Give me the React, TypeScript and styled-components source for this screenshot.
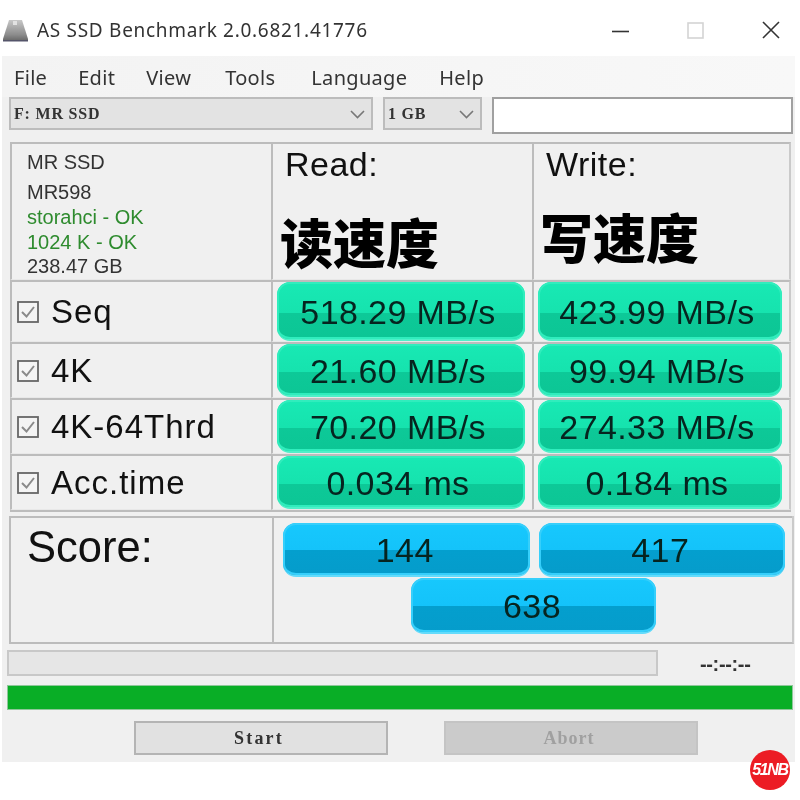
import { Fragment } from "react";
import styled, { createGlobalStyle } from "styled-components";

const GlobalStyle = createGlobalStyle`
  html, body {
    margin: 0;
    padding: 0;
    background: #fff;
  }
`

const Page = styled.div`
  position: relative;
  width: 800px;
  height: 800px;
  overflow: hidden;
  background: #fff;
  font-family: "Liberation Sans", Arial, sans-serif;
  color: #111;
  filter: blur(0.4px);
`

const TitleBar = styled.div`
  display: flex;
  align-items: center;
  height: 56px;
  padding: 4px 0 0 3px;
  box-sizing: border-box;
`

const TitleText = styled.div`
  margin-left: 9px;
  font-family: "Noto Sans", sans-serif;
  font-size: 19px;
  letter-spacing: 0.7px;
  color: #333;
`

const WindowButtons = styled.div`
  display: flex;
  align-items: center;
  margin-left: auto;
  gap: 58px;
  padding-right: 20px;
`

const Window = styled.div`
  margin-left: 2px;
  width: 793px;
  height: 706px;
  background: #f0f0f0;
`

const MenuBar = styled.div`
  display: flex;
  align-items: center;
  height: 41px;
  padding: 1px 0 0 12px;
  box-sizing: border-box;
  background: linear-gradient(90deg, #f3f3f3, #f8f8f8);
  font-family: "Noto Sans", sans-serif;
  font-size: 20px;
  letter-spacing: 0.3px;
  color: #333;
`

const MenuItem = styled.span<{ $gap: number }>`
  margin-right: ${(p) => p.$gap}px;
`

const ControlRow = styled.div`
  display: flex;
  align-items: flex-start;
  height: 45px;
  padding-left: 7px;
`

const Combo = styled.div<{ $width: number; $gap: number }>`
  display: flex;
  align-items: center;
  justify-content: space-between;
  box-sizing: border-box;
  width: ${(p) => p.$width}px;
  height: 33px;
  margin-right: ${(p) => p.$gap}px;
  padding: 1px 6px 0 3px;
  background: #e3e3e3;
  border: 2px solid #bcbcbc;
  font-family: "Liberation Serif", serif;
  font-size: 16px;
  font-weight: bold;
  letter-spacing: 0.8px;
  color: #333;
`

const TextBox = styled.div`
  box-sizing: border-box;
  width: 301px;
  height: 37px;
  background: #fff;
  border: 2px solid #a0a0a0;
`

const ResultGrid = styled.div`
  display: grid;
  grid-template-columns: 261px 261px 259px;
  grid-template-rows: 138px 62px 56px 56px 56px;
  margin-left: 8px;
  width: 781px;
  border-bottom: 2px solid #bcbcbc;
`

const Cell = styled.div<{ $last?: boolean }>`
  box-sizing: border-box;
  border-top: 2px solid #bcbcbc;
  border-left: 2px solid #bcbcbc;
  border-right: ${(p) => (p.$last ? "2px solid #cacaca" : "none")};
  border-bottom: 1px solid #e8e8e8;
`

const DriveCell = styled(Cell)`
  padding: 3px 0 0 15px;
  font-size: 20px;
  color: #333;
`

const DriveLine = styled.div<{ $height: number; $green?: boolean; $pull?: number }>`
  height: ${(p) => p.$height}px;
  line-height: ${(p) => p.$height}px;
  margin-bottom: ${(p) => p.$pull || 0}px;
  color: ${(p) => (p.$green ? "#2e8b2e" : "#333")};
`

const HeadCell = styled(Cell)`
  padding-left: 12px;
`

const HeadLabel = styled.div`
  height: 44px;
  font-size: 34px;
  letter-spacing: 0.5px;
  line-height: 40px;
`

const BigLabel = styled.div<{ $top: number; $left: number }>`
  margin-top: ${(p) => p.$top}px;
  margin-left: ${(p) => p.$left}px;
  font-family: "Noto Sans CJK SC", sans-serif;
  font-size: 53px;
  font-weight: 900;
  line-height: 56px;
  color: #000;
`

const NameCell = styled(Cell)`
  display: flex;
  align-items: center;
  gap: 12px;
  padding-left: 5px;
  font-size: 33px;
  letter-spacing: 1px;
`

const ValueCell = styled(Cell)`
  display: flex;
  align-items: stretch;
  padding: 0 7px 0 4px;
`

const Pill = styled.div<{ $tone: "green" | "blue" }>`
  display: flex;
  align-items: center;
  justify-content: center;
  flex: 1;
  box-sizing: border-box;
  padding: 3px ${(p) => (p.$tone === "green" ? 6 : 3)}px 0 0;
  border-radius: 13px;
  font-size: 34px;
  letter-spacing: 0.4px;
  color: #06241f;
  background: ${(p) =>
    p.$tone === "green"
      ? "linear-gradient(180deg, #18e9b4 0%, #16e3ae 54%, #0dc998 54%, #0cc695 100%)"
      : "linear-gradient(180deg, #17c8fd 0%, #14c3fa 52%, #049fce 52%, #059ccb 100%)"};
  box-shadow: inset 0 0 0 2px
    ${(p) => (p.$tone === "green" ? "#30edbd" : "#36cffb")};
  border-bottom: 2px solid ${(p) => (p.$tone === "green" ? "#4ff0c8" : "#63dbfb")};
`

const ScoreBox = styled.div`
  display: grid;
  grid-template-columns: 263px 1fr;
  box-sizing: border-box;
  margin: 4px 0 0 7px;
  width: 785px;
  height: 128px;
  border-bottom: 2px solid #bcbcbc;
  border-right: 2px solid #cacaca;
`

const ScoreLabel = styled.div`
  padding: 4px 0 0 16px;
  border-top: 2px solid #bcbcbc;
  border-left: 2px solid #bcbcbc;
  font-size: 43.5px;
  line-height: 50px;
`

const ScoreValues = styled.div`
  display: grid;
  grid-template-columns: repeat(2, 1fr);
  grid-template-rows: 54px 56px;
  gap: 1px 9px;
  padding: 5px 7px 0 9px;
  border-top: 2px solid #bcbcbc;
  border-left: 2px solid #bcbcbc;
`

const ScoreWrap = styled.div`
  display: flex;
  grid-column: 1 / -1;
  padding: 0 129px 0 128px;
`

const ProgressRow = styled.div`
  display: flex;
  align-items: center;
  margin: 6px 0 0 5px;
  height: 26px;
`

const Progress = styled.div`
  box-sizing: border-box;
  width: 651px;
  height: 26px;
  background: #e6e6e6;
  border: 2px solid #c8c8c8;
`

const Eta = styled.div`
  margin-left: 42px;
  padding-top: 2px;
  font-size: 20px;
  font-weight: bold;
  letter-spacing: -0.35px;
  color: #333;
`

const GreenBar = styled.div`
  box-sizing: border-box;
  margin: 9px 0 0 5px;
  width: 786px;
  height: 25px;
  background: #09ae26;
  border: 1px solid #8fc79a;
`

const ButtonRow = styled.div`
  display: flex;
  gap: 56px;
  margin: 11px 0 0 132px;
`

const ActionButton = styled.div<{ $disabled?: boolean }>`
  display: flex;
  align-items: center;
  justify-content: center;
  box-sizing: border-box;
  width: 254px;
  height: 34px;
  padding-right: 4px;
  background: ${(p) => (p.$disabled ? "#cbcbcb" : "#e1e1e1")};
  border: 2px solid ${(p) => (p.$disabled ? "#c4c4c4" : "#b4b4b4")};
  font-family: "Liberation Serif", serif;
  font-size: 18px;
  font-weight: bold;
  letter-spacing: ${(p) => (p.$disabled ? "1px" : "2.2px")};
  color: ${(p) => (p.$disabled ? "#a0a0a0" : "#333")};
`

const Badge = styled.div`
  position: absolute;
  left: 750px;
  top: 750px;
  display: flex;
  align-items: center;
  justify-content: center;
  width: 40px;
  height: 40px;
  border-radius: 50%;
  background: #ec1c24;
  font-family: "Liberation Sans Narrow", "Liberation Sans", sans-serif;
  font-size: 16px;
  font-weight: bold;
  font-style: italic;
  letter-spacing: -1.4px;
  color: #fff;
`

const DriveIcon = () => (
  <svg width="25" height="23" viewBox="0 0 25 23">
    <defs>
      <linearGradient id="drive" x1="0" y1="0" x2="0" y2="1">
        <stop offset="0" stopColor="#c8c8c8" />
        <stop offset="0.7" stopColor="#8c8c8c" />
        <stop offset="1" stopColor="#666" />
      </linearGradient>
    </defs>
    <path d="M6 1h13l6 19v2H0v-2z" fill="url(#drive)" />
    <path d="M10 2h4v4h-4z" fill="#e2e2e2" />
    <path d="M0 21h25v1.5H0z" fill="#55556a" />
  </svg>
)

const MinimizeIcon = () => (
  <svg width="17" height="17" viewBox="0 0 17 17">
    <path d="M0 9.5h17" stroke="#333" strokeWidth="1.6" />
  </svg>
)

const MaximizeIcon = () => (
  <svg width="17" height="17" viewBox="0 0 17 17">
    <rect x="1" y="1" width="15" height="15" fill="none" stroke="#d4d4d4" strokeWidth="1.6" />
  </svg>
)

const CloseIcon = () => (
  <svg width="18" height="18" viewBox="0 0 18 18">
    <path d="M1 1l16 16M17 1L1 17" stroke="#333" strokeWidth="1.6" />
  </svg>
)

const Chevron = () => (
  <svg width="15" height="9" viewBox="0 0 15 9">
    <path d="M1 1l6.5 6.5L14 1" fill="none" stroke="#777" strokeWidth="1.6" />
  </svg>
)

const CheckIcon = () => (
  <svg width="22" height="22" viewBox="0 0 22 22">
    <rect x="1" y="1" width="20" height="20" fill="#f4f4f4" stroke="#666" strokeWidth="1.8" />
    <path d="M5 11l4.5 4.5L17 6" fill="none" stroke="#8a8a8a" strokeWidth="2" />
  </svg>
)

const rows = [
  { name: "Seq", read: "518.29 MB/s", write: "423.99 MB/s" },
  { name: "4K", read: "21.60 MB/s", write: "99.94 MB/s" },
  { name: "4K-64Thrd", read: "70.20 MB/s", write: "274.33 MB/s" },
  { name: "Acc.time", read: "0.034 ms", write: "0.184 ms" },
]

const menus = [
  { label: "File", gap: 31 },
  { label: "Edit", gap: 31 },
  { label: "View", gap: 34 },
  { label: "Tools", gap: 36 },
  { label: "Language", gap: 32 },
  { label: "Help", gap: 0 },
]

const App = (): JSX.Element => {
  return (
    <Page>
      <GlobalStyle />
      <TitleBar>
        <DriveIcon />
        <TitleText>AS SSD Benchmark 2.0.6821.41776</TitleText>
        <WindowButtons>
          <MinimizeIcon />
          <MaximizeIcon />
          <CloseIcon />
        </WindowButtons>
      </TitleBar>
      <Window>
        <MenuBar>
          {menus.map((m) => (
            <MenuItem key={m.label} $gap={m.gap}>{m.label}</MenuItem>
          ))}
        </MenuBar>
        <ControlRow>
          <Combo $width={364} $gap={10}>F: MR SSD<Chevron /></Combo>
          <Combo $width={99} $gap={10}>1 GB<Chevron /></Combo>
          <TextBox />
        </ControlRow>
        <ResultGrid>
          <DriveCell>
            <DriveLine $height={31}>MR SSD</DriveLine>
            <DriveLine $height={29} $pull={-2}>MR598</DriveLine>
            <DriveLine $height={25} $green>storahci - OK</DriveLine>
            <DriveLine $height={24} $green>1024 K - OK</DriveLine>
            <DriveLine $height={25}>238.47 GB</DriveLine>
          </DriveCell>
          <HeadCell>
            <HeadLabel>Read:</HeadLabel>
            <BigLabel $top={25} $left={-5}>读速度</BigLabel>
          </HeadCell>
          <HeadCell $last>
            <HeadLabel>Write:</HeadLabel>
            <BigLabel $top={20} $left={-6}>写速度</BigLabel>
          </HeadCell>
          {rows.map((r) => (
            <Fragment key={r.name}>
              <NameCell>
                <CheckIcon />
                {r.name}
              </NameCell>
              <ValueCell>
                <Pill $tone="green">{r.read}</Pill>
              </ValueCell>
              <ValueCell $last>
                <Pill $tone="green">{r.write}</Pill>
              </ValueCell>
            </Fragment>
          ))}
        </ResultGrid>
        <ScoreBox>
          <ScoreLabel>Score:</ScoreLabel>
          <ScoreValues>
            <Pill $tone="blue">144</Pill>
            <Pill $tone="blue">417</Pill>
            <ScoreWrap><Pill $tone="blue">638</Pill></ScoreWrap>
          </ScoreValues>
        </ScoreBox>
        <ProgressRow>
          <Progress />
          <Eta>--:--:--</Eta>
        </ProgressRow>
        <GreenBar />
        <ButtonRow>
          <ActionButton>Start</ActionButton>
          <ActionButton $disabled>Abort</ActionButton>
        </ButtonRow>
      </Window>
      <Badge>51NB</Badge>
    </Page>
  )
}

export default App;
